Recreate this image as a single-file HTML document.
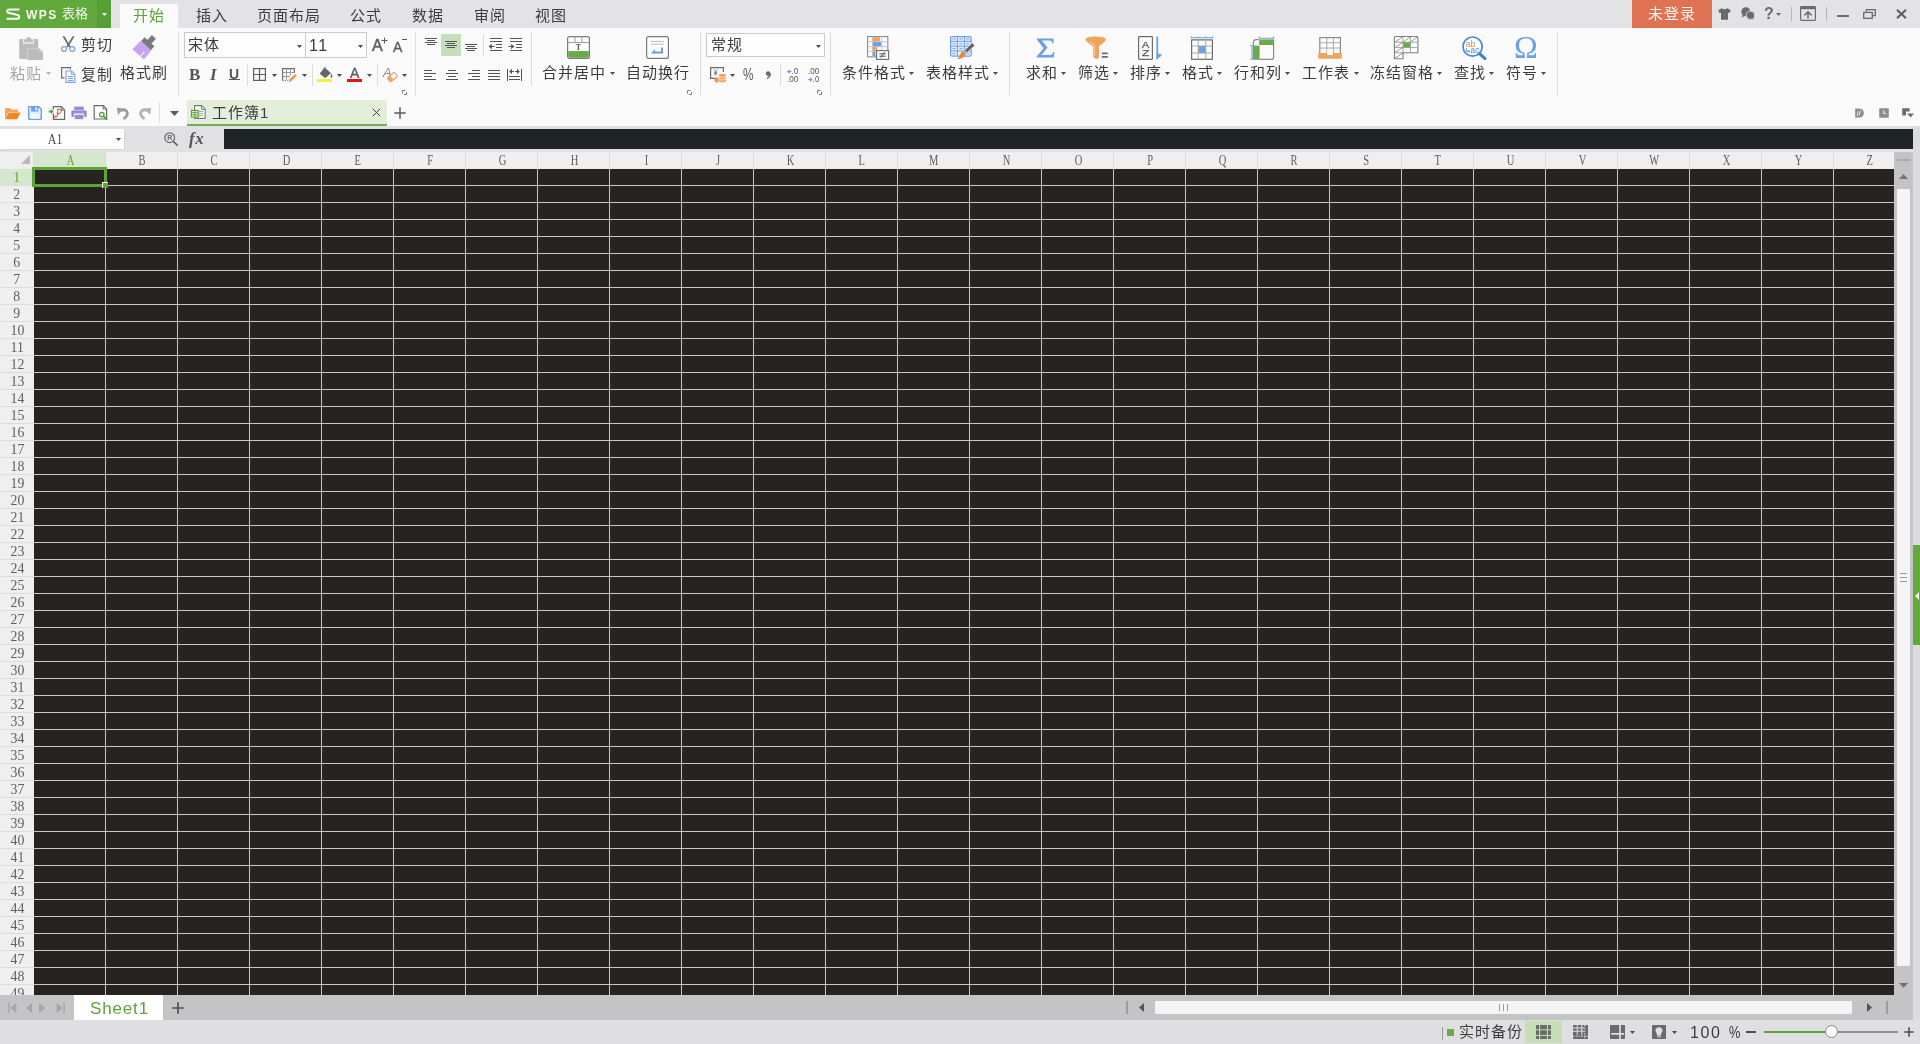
<!DOCTYPE html>
<html lang="zh-CN"><head><meta charset="utf-8"><title>WPS 表格 - 工作簿1</title>
<style>
html,body{margin:0;padding:0}
body{width:1920px;height:1044px;position:relative;will-change:transform;overflow:hidden;background:#fafafa;
 font-family:"Liberation Sans","Noto Sans CJK SC","WenQuanYi Zen Hei",sans-serif;color:#3c3c3c}
.t{position:absolute;white-space:nowrap;display:block}
.r{position:absolute;display:block}
.ser{font-family:"Liberation Serif","Noto Serif CJK SC",serif}

.ch{position:absolute;top:0;width:72px;height:17px;line-height:17px;text-align:center;font-size:15px}
.rh{position:absolute;left:0;width:34px;height:17px;line-height:17px;text-align:center;font-size:15px}
.ch i,.rh i{font-style:normal;display:inline-block;transform-origin:50% 50%}
.ch i{transform:scaleX(.7)}.rh i{transform:scaleX(.92)}
.cl{position:absolute;top:1px;width:1px;height:15px;background:#dadada}
.rl{position:absolute;left:0;width:33px;height:1px;background:#dcdcdc}

</style></head><body>
<div class="r" style="left:0px;top:0px;width:1920px;height:28px;background:#e3e3e5;"></div>
<div class="r" style="left:0px;top:28px;width:1920px;height:98px;background:#fafafa;"></div>
<div class="r" style="left:0px;top:126px;width:1920px;height:26px;background:#e1e1e3;"></div>
<div class="r" style="left:0px;top:152px;width:1894px;height:17px;background:#efefef;"></div>
<div class="r" style="left:0px;top:169px;width:34px;height:826px;background:#efefef;"></div>
<div class="r" style="left:34px;top:169px;width:1860px;height:826px;background:#262321;background-image:linear-gradient(to right,transparent 71px,#cbc8c4 71px),linear-gradient(to bottom,transparent 16px,#cbc8c4 16px);background-size:72px 17px;"></div>
<div class="r" style="left:1894px;top:152px;width:19px;height:843px;background:#c4c4c6;"></div>
<div class="r" style="left:1913px;top:126px;width:7px;height:894px;background:#dcdcde;"></div>
<div class="r" style="left:0px;top:995px;width:1913px;height:25px;background:#c4c4c6;"></div>
<div class="r" style="left:0px;top:1020px;width:1920px;height:24px;background:#dfdfe1;"></div>
<div class="r" style="left:34px;top:152px;width:72px;height:16px;background:#d5e8cd;"></div>
<div class="r" style="left:0px;top:169px;width:33px;height:17px;background:#d5e8cd;"></div>
<div class="r" style="left:33px;top:153px;width:1px;height:15px;background:#dadada;"></div>
<div class="r ser" id="colhdr" style="left:0;top:152px;width:1894px;height:17px;overflow:hidden"><span class="ch" style="left:34px;color:#5ea23b"><i>A</i></span><b class="cl" style="left:105px"></b><span class="ch" style="left:106px;color:#5e5e5e"><i>B</i></span><b class="cl" style="left:177px"></b><span class="ch" style="left:178px;color:#5e5e5e"><i>C</i></span><b class="cl" style="left:249px"></b><span class="ch" style="left:250px;color:#5e5e5e"><i>D</i></span><b class="cl" style="left:321px"></b><span class="ch" style="left:322px;color:#5e5e5e"><i>E</i></span><b class="cl" style="left:393px"></b><span class="ch" style="left:394px;color:#5e5e5e"><i>F</i></span><b class="cl" style="left:465px"></b><span class="ch" style="left:466px;color:#5e5e5e"><i>G</i></span><b class="cl" style="left:537px"></b><span class="ch" style="left:538px;color:#5e5e5e"><i>H</i></span><b class="cl" style="left:609px"></b><span class="ch" style="left:610px;color:#5e5e5e"><i>I</i></span><b class="cl" style="left:681px"></b><span class="ch" style="left:682px;color:#5e5e5e"><i>J</i></span><b class="cl" style="left:753px"></b><span class="ch" style="left:754px;color:#5e5e5e"><i>K</i></span><b class="cl" style="left:825px"></b><span class="ch" style="left:826px;color:#5e5e5e"><i>L</i></span><b class="cl" style="left:897px"></b><span class="ch" style="left:898px;color:#5e5e5e"><i>M</i></span><b class="cl" style="left:969px"></b><span class="ch" style="left:970px;color:#5e5e5e"><i>N</i></span><b class="cl" style="left:1041px"></b><span class="ch" style="left:1042px;color:#5e5e5e"><i>O</i></span><b class="cl" style="left:1113px"></b><span class="ch" style="left:1114px;color:#5e5e5e"><i>P</i></span><b class="cl" style="left:1185px"></b><span class="ch" style="left:1186px;color:#5e5e5e"><i>Q</i></span><b class="cl" style="left:1257px"></b><span class="ch" style="left:1258px;color:#5e5e5e"><i>R</i></span><b class="cl" style="left:1329px"></b><span class="ch" style="left:1330px;color:#5e5e5e"><i>S</i></span><b class="cl" style="left:1401px"></b><span class="ch" style="left:1402px;color:#5e5e5e"><i>T</i></span><b class="cl" style="left:1473px"></b><span class="ch" style="left:1474px;color:#5e5e5e"><i>U</i></span><b class="cl" style="left:1545px"></b><span class="ch" style="left:1546px;color:#5e5e5e"><i>V</i></span><b class="cl" style="left:1617px"></b><span class="ch" style="left:1618px;color:#5e5e5e"><i>W</i></span><b class="cl" style="left:1689px"></b><span class="ch" style="left:1690px;color:#5e5e5e"><i>X</i></span><b class="cl" style="left:1761px"></b><span class="ch" style="left:1762px;color:#5e5e5e"><i>Y</i></span><b class="cl" style="left:1833px"></b><span class="ch" style="left:1834px;color:#5e5e5e"><i>Z</i></span><b class="cl" style="left:1905px"></b></div>
<div class="r ser" id="rowhdr" style="left:0;top:169px;width:34px;height:826px;overflow:hidden"><span class="rh" style="top:0px;color:#5ea23b"><i>1</i></span><b class="rl" style="top:16px"></b><span class="rh" style="top:17px;color:#5e5e5e"><i>2</i></span><b class="rl" style="top:33px"></b><span class="rh" style="top:34px;color:#5e5e5e"><i>3</i></span><b class="rl" style="top:50px"></b><span class="rh" style="top:51px;color:#5e5e5e"><i>4</i></span><b class="rl" style="top:67px"></b><span class="rh" style="top:68px;color:#5e5e5e"><i>5</i></span><b class="rl" style="top:84px"></b><span class="rh" style="top:85px;color:#5e5e5e"><i>6</i></span><b class="rl" style="top:101px"></b><span class="rh" style="top:102px;color:#5e5e5e"><i>7</i></span><b class="rl" style="top:118px"></b><span class="rh" style="top:119px;color:#5e5e5e"><i>8</i></span><b class="rl" style="top:135px"></b><span class="rh" style="top:136px;color:#5e5e5e"><i>9</i></span><b class="rl" style="top:152px"></b><span class="rh" style="top:153px;color:#5e5e5e"><i>10</i></span><b class="rl" style="top:169px"></b><span class="rh" style="top:170px;color:#5e5e5e"><i>11</i></span><b class="rl" style="top:186px"></b><span class="rh" style="top:187px;color:#5e5e5e"><i>12</i></span><b class="rl" style="top:203px"></b><span class="rh" style="top:204px;color:#5e5e5e"><i>13</i></span><b class="rl" style="top:220px"></b><span class="rh" style="top:221px;color:#5e5e5e"><i>14</i></span><b class="rl" style="top:237px"></b><span class="rh" style="top:238px;color:#5e5e5e"><i>15</i></span><b class="rl" style="top:254px"></b><span class="rh" style="top:255px;color:#5e5e5e"><i>16</i></span><b class="rl" style="top:271px"></b><span class="rh" style="top:272px;color:#5e5e5e"><i>17</i></span><b class="rl" style="top:288px"></b><span class="rh" style="top:289px;color:#5e5e5e"><i>18</i></span><b class="rl" style="top:305px"></b><span class="rh" style="top:306px;color:#5e5e5e"><i>19</i></span><b class="rl" style="top:322px"></b><span class="rh" style="top:323px;color:#5e5e5e"><i>20</i></span><b class="rl" style="top:339px"></b><span class="rh" style="top:340px;color:#5e5e5e"><i>21</i></span><b class="rl" style="top:356px"></b><span class="rh" style="top:357px;color:#5e5e5e"><i>22</i></span><b class="rl" style="top:373px"></b><span class="rh" style="top:374px;color:#5e5e5e"><i>23</i></span><b class="rl" style="top:390px"></b><span class="rh" style="top:391px;color:#5e5e5e"><i>24</i></span><b class="rl" style="top:407px"></b><span class="rh" style="top:408px;color:#5e5e5e"><i>25</i></span><b class="rl" style="top:424px"></b><span class="rh" style="top:425px;color:#5e5e5e"><i>26</i></span><b class="rl" style="top:441px"></b><span class="rh" style="top:442px;color:#5e5e5e"><i>27</i></span><b class="rl" style="top:458px"></b><span class="rh" style="top:459px;color:#5e5e5e"><i>28</i></span><b class="rl" style="top:475px"></b><span class="rh" style="top:476px;color:#5e5e5e"><i>29</i></span><b class="rl" style="top:492px"></b><span class="rh" style="top:493px;color:#5e5e5e"><i>30</i></span><b class="rl" style="top:509px"></b><span class="rh" style="top:510px;color:#5e5e5e"><i>31</i></span><b class="rl" style="top:526px"></b><span class="rh" style="top:527px;color:#5e5e5e"><i>32</i></span><b class="rl" style="top:543px"></b><span class="rh" style="top:544px;color:#5e5e5e"><i>33</i></span><b class="rl" style="top:560px"></b><span class="rh" style="top:561px;color:#5e5e5e"><i>34</i></span><b class="rl" style="top:577px"></b><span class="rh" style="top:578px;color:#5e5e5e"><i>35</i></span><b class="rl" style="top:594px"></b><span class="rh" style="top:595px;color:#5e5e5e"><i>36</i></span><b class="rl" style="top:611px"></b><span class="rh" style="top:612px;color:#5e5e5e"><i>37</i></span><b class="rl" style="top:628px"></b><span class="rh" style="top:629px;color:#5e5e5e"><i>38</i></span><b class="rl" style="top:645px"></b><span class="rh" style="top:646px;color:#5e5e5e"><i>39</i></span><b class="rl" style="top:662px"></b><span class="rh" style="top:663px;color:#5e5e5e"><i>40</i></span><b class="rl" style="top:679px"></b><span class="rh" style="top:680px;color:#5e5e5e"><i>41</i></span><b class="rl" style="top:696px"></b><span class="rh" style="top:697px;color:#5e5e5e"><i>42</i></span><b class="rl" style="top:713px"></b><span class="rh" style="top:714px;color:#5e5e5e"><i>43</i></span><b class="rl" style="top:730px"></b><span class="rh" style="top:731px;color:#5e5e5e"><i>44</i></span><b class="rl" style="top:747px"></b><span class="rh" style="top:748px;color:#5e5e5e"><i>45</i></span><b class="rl" style="top:764px"></b><span class="rh" style="top:765px;color:#5e5e5e"><i>46</i></span><b class="rl" style="top:781px"></b><span class="rh" style="top:782px;color:#5e5e5e"><i>47</i></span><b class="rl" style="top:798px"></b><span class="rh" style="top:799px;color:#5e5e5e"><i>48</i></span><b class="rl" style="top:815px"></b><span class="rh" style="top:816px;color:#5e5e5e"><i>49</i></span><b class="rl" style="top:832px"></b></div>
<svg class="r" style="left:21px;top:155px;" width="9" height="9" viewBox="0 0 9 9"><path d="M9 0V9H0Z" fill="#b9b9b9"/></svg>
<div class="r" style="left:32px;top:167px;width:75px;height:20px;background:transparent;box-sizing:border-box;border:3px solid #5ea23b"></div>
<div class="r" style="left:102px;top:182px;width:6px;height:6px;background:#5ea23b;box-sizing:border-box;border:1px solid #f4f4f4;border-right:none;border-bottom:none"></div>
<div class="r" style="left:0px;top:129px;width:124px;height:20px;background:#ffffff;box-shadow:1px 1px 0 #d6d6d8"></div>
<span class="t ser" style="left:0;top:131px;width:110px;text-align:center;font-size:15px;line-height:17px;color:#4a4a4a"><i style="font-style:normal;display:inline-block;transform:scaleX(.8)">A1</i></span>
<svg class="r" style="left:116px;top:138px" width="5" height="3" viewBox="0 0 5 3"><path d="M0 0H5L2.5 3Z" fill="#4a4a4a"/></svg>
<svg class="r" style="left:164px;top:132px;" width="14" height="14" viewBox="0 0 14 14"><circle cx="5.7" cy="5.7" r="4.9" fill="none" stroke="#6b6b6b" stroke-width="1.2"/><path d="M9.3 9.3L13.2 13.2" stroke="#6b6b6b" stroke-width="1.8" stroke-linecap="round"/><text x="5.7" y="8.2" font-size="7" font-weight="bold" text-anchor="middle" fill="#6b6b6b" font-family="Liberation Sans,sans-serif">R</text></svg>
<span class="t ser" style="left:189px;top:130px;font-size:17px;line-height:18px;font-style:italic;font-weight:bold;letter-spacing:.6px;color:#555">fx</span>
<div class="r" style="left:224px;top:129px;width:1689px;height:20px;background:#1f2426;"></div>
<svg class="r" style="left:4px;top:107px;" width="17" height="13" viewBox="0 0 17 13"><path d="M1 2.4Q1 1 2.4 1H6l1.4 1.6H12.8Q14 2.6 14 3.8V5H4.2L1.4 11.4H1Z" fill="#f2a65a"/><path d="M4.6 5.4H16.6L13.2 12.2H1.2Z" fill="#f5861f"/></svg>
<svg class="r" style="left:28px;top:106px;" width="14" height="14" viewBox="0 0 14 14"><path d="M1.5 .7H10.8L13.3 3.2V12.5Q13.3 13.3 12.5 13.3H1.5Q.7 13.3 .7 12.5V1.5Q.7 .7 1.5 .7Z" fill="#e4edfb" stroke="#6c9fe8" stroke-width="1.4"/><rect x="3.2" y="1" width="7" height="4.6" fill="#6c9fe8"/><rect x="7.2" y="1.4" width="1.8" height="3" fill="#e4edfb"/><rect x="2.4" y="7.8" width="9.2" height="5" fill="#f2f6fd"/></svg>
<svg class="r" style="left:48px;top:106px;" width="18" height="14" viewBox="0 0 18 14"><path d="M5.4 3.4V.7H13.4L16.6 3.9V13.3H5.4V7.6" fill="#fdfdfd" stroke="#6b6b6b" stroke-width="1.2"/><path d="M13.2 .9V4.1H16.4" fill="none" stroke="#6b6b6b" stroke-width="1"/><path d="M.8 4.6H3V3L5.6 5.6L3 8.2V6.6H.8Z" fill="#4da03a"/><path d="M9.4 3.4C13.6 2 14.6 6.8 11 7.6C9.8 7.8 9 7.4 9 6.6M9.6 3.4C10 6 9.8 8.8 8.8 10.6C7.8 12.2 5.8 11.8 6.4 10.4C6.8 9.4 8.2 9.6 8.4 10.4" fill="none" stroke="#d9432f" stroke-width="1"/></svg>
<svg class="r" style="left:71px;top:106px;" width="16" height="14" viewBox="0 0 16 14"><rect x="3.2" y=".6" width="9.6" height="3.4" fill="#9090d4"/><rect x=".4" y="4.4" width="15.2" height="6.6" rx="1" fill="#8a8ad0"/><rect x="3.2" y="8.4" width="9.6" height="5.2" fill="#9090d4" stroke="#fafafa" stroke-width=".8"/><rect x="3" y="6.8" width="10" height=".9" fill="#fafafa" opacity=".7"/></svg>
<svg class="r" style="left:93px;top:105px;" width="15" height="15" viewBox="0 0 15 15"><path d="M1.2 .7H10.4L13.6 3.9V14H1.2Z" fill="#fdfdfd" stroke="#6b6b6b" stroke-width="1.2"/><path d="M10.2 .9V4.1H13.4" fill="none" stroke="#6b6b6b" stroke-width="1"/><circle cx="8.8" cy="9.6" r="2.3" fill="#fdfdfd" stroke="#4da03a" stroke-width="1.2"/><path d="M10.6 11.4L13.6 14.2" stroke="#4da03a" stroke-width="1.8" stroke-linecap="round"/></svg>
<svg class="r" style="left:116px;top:106px;" width="14" height="14" viewBox="0 0 14 14"><path d="M7.4 12.8C11.4 11 12.4 7 10.2 4.8C8.6 3.4 6.4 3.6 4.8 5" fill="none" stroke="#9c9c9c" stroke-width="2.8"/><path d="M.8 1.8L7.6 2.6L2 9Z" fill="#9c9c9c"/></svg>
<svg class="r" style="left:138px;top:106px;" width="14" height="14" viewBox="0 0 14 14"><path d="M6.6 12.8C2.6 11 1.6 7 3.8 4.8C5.4 3.4 7.6 3.6 9.2 5" fill="none" stroke="#b2b2b2" stroke-width="2.8"/><path d="M13.2 1.8L6.4 2.6L12 9Z" fill="#b2b2b2"/></svg>
<div class="r" style="left:159px;top:102px;width:1px;height:21px;background:#dedede;"></div>
<svg class="r" style="left:170px;top:111px" width="9" height="5" viewBox="0 0 9 5"><path d="M0 0H9L4.5 5Z" fill="#5a5a5a"/></svg>
<div class="r" style="left:187px;top:100px;width:200px;height:26px;background:#e2edda;"></div>
<div class="r" style="left:187px;top:124px;width:200px;height:2px;background:#72af52;"></div>
<svg class="r" style="left:191px;top:105px;" width="15" height="14" viewBox="0 0 15 14"><path d="M3.6 .6H10.6L14.2 4.2V13.4H3.6Z" fill="#fff" stroke="#7a7a7a" stroke-width="1.1"/><path d="M10.4 .8V4.4H14" fill="none" stroke="#7a7a7a" stroke-width="1"/><path d="M6 6.4H12.4M6 8.4H12.4M6 10.4H12.4" stroke="#9a9a9a" stroke-width=".9"/><rect x=".6" y="5.4" width="6.6" height="6.6" fill="#fff" stroke="#57a33a" stroke-width="1.2"/><path d="M1.2 7.6H6.6M1.2 9.8H6.6M3.9 6V11.4" stroke="#57a33a" stroke-width="1"/></svg>
<span class="t" style="left:212px;top:105px;font-size:15px;letter-spacing:1px;line-height:16px;color:#3c3c3c;">工作簿1</span>
<svg class="r" style="left:372px;top:108px;" width="9" height="9" viewBox="0 0 9 9"><path d="M.8 .8L8.2 8.2M8.2 .8L.8 8.2" stroke="#3f3f3f" stroke-width="1"/></svg>
<svg class="r" style="left:394px;top:107px;" width="12" height="12" viewBox="0 0 12 12"><path d="M6 .3V11.7M.3 6H11.7" stroke="#5a5a5a" stroke-width="1.5"/></svg>
<svg class="r" style="left:1854px;top:108px;" width="10" height="10" viewBox="0 0 10 10"><path d="M1.2 .4H5Q9.8 .8 9.8 5Q9.8 9.2 5 9.6H1.2Z" fill="#8b8b96"/><path d="M3.2 7.4L4.2 3.4M5 7.6L6.6 2.6" stroke="#f3f3f3" stroke-width=".9"/></svg>
<svg class="r" style="left:1879px;top:108px;" width="10" height="10" viewBox="0 0 10 10"><rect x=".2" y=".2" width="9.6" height="9.6" rx="1" fill="#8b8b96"/><path d="M4.6 2.4V5.4H7.2" stroke="#f3f3f3" stroke-width="1" fill="none"/></svg>
<svg class="r" style="left:1902px;top:108px;" width="12" height="10" viewBox="0 0 12 10"><path d="M.2 .2H7.6V3.6H4V7.4H.2Z" fill="#6d6d6d"/><path d="M5.2 5.4H12L8.6 9.6Z" fill="#6d6d6d"/></svg>
<div class="r" style="left:0px;top:0px;width:97px;height:28px;background:#61a93d;"></div>
<div class="r" style="left:97px;top:0px;width:14px;height:28px;background:#579f34;"></div>
<svg class="r" style="left:6px;top:8px;" width="15" height="12" viewBox="0 0 15 12"><path d="M13.4 1.4H3.4Q1.2 1.4 1.2 3.2Q1.2 4.9 3.4 5.1L10.8 6.7Q13.2 7.1 13.2 8.9Q13.2 10.7 11 10.7H.6" fill="none" stroke="#f3f9ee" stroke-width="2" stroke-linejoin="round"/></svg>
<span class="t" style="left:26px;top:8px;font-size:12px;line-height:12px;color:#f3f9ee;font-weight:bold;letter-spacing:1.4px;line-height:14px">WPS</span>
<span class="t" style="left:62px;top:7px;font-size:13px;line-height:13px;color:#f3f9ee;line-height:13px">表格</span>
<svg class="r" style="left:102px;top:13px" width="5" height="3" viewBox="0 0 5 3"><path d="M0 0H5L2.5 3Z" fill="#f3f9ee"/></svg>
<div class="r" style="left:120px;top:4px;width:58px;height:24px;background:#fafafa;"></div>
<span class="t" style="left:133px;top:8px;font-size:15px;letter-spacing:1px;line-height:16px;color:#5ea23b;">开始</span>
<span class="t" style="left:196px;top:8px;font-size:15px;letter-spacing:1px;line-height:16px;color:#3c3c3c;">插入</span>
<span class="t" style="left:257px;top:8px;font-size:15px;letter-spacing:1px;line-height:16px;color:#3c3c3c;">页面布局</span>
<span class="t" style="left:350px;top:8px;font-size:15px;letter-spacing:1px;line-height:16px;color:#3c3c3c;">公式</span>
<span class="t" style="left:412px;top:8px;font-size:15px;letter-spacing:1px;line-height:16px;color:#3c3c3c;">数据</span>
<span class="t" style="left:474px;top:8px;font-size:15px;letter-spacing:1px;line-height:16px;color:#3c3c3c;">审阅</span>
<span class="t" style="left:535px;top:8px;font-size:15px;letter-spacing:1px;line-height:16px;color:#3c3c3c;">视图</span>
<div class="r" style="left:1632px;top:0px;width:80px;height:28px;background:#e07254;"></div>
<span class="t" style="left:1648px;top:6px;font-size:15px;letter-spacing:1px;line-height:16px;color:#fdf3ef;">未登录</span>
<svg class="r" style="left:1718px;top:8px;" width="13" height="12" viewBox="0 0 13 12"><path d="M3.6 .3Q6.5 2.4 9.4 .3L12.8 2.2L11.4 5.2L10 4.6V11.7H3V4.6L1.6 5.2L.2 2.2Z" fill="#6b6b6b"/></svg>
<svg class="r" style="left:1741px;top:7px;" width="14" height="13" viewBox="0 0 14 13"><circle cx="4.8" cy="4.8" r="4.5" fill="#6b6b6b"/><path d="M1.6 7.4L.8 10.4L4.4 8.8Z" fill="#6b6b6b"/><circle cx="9.4" cy="8.2" r="4.2" fill="#6b6b6b" stroke="#e3e3e5" stroke-width=".9"/><path d="M11.2 11.2L12.8 12.8L12.6 10.2Z" fill="#6b6b6b"/></svg>
<span class="t" style="left:1764px;top:6px;font-size:16px;line-height:16px;color:#6b6b6b;font-weight:bold;line-height:16px">?</span>
<svg class="r" style="left:1776px;top:13px" width="5" height="3" viewBox="0 0 5 3"><path d="M0 0H5L2.5 3Z" fill="#6b6b6b"/></svg>
<div class="r" style="left:1791px;top:7px;width:1px;height:14px;background:#b4b4b6;"></div>
<svg class="r" style="left:1800px;top:6px;" width="16" height="15" viewBox="0 0 16 15"><rect x=".6" y=".6" width="14.8" height="13.8" rx="1" fill="none" stroke="#6b6b6b" stroke-width="1.2"/><rect x=".6" y=".6" width="14.8" height="2.6" fill="#6b6b6b"/><path d="M8 12.6V6M4.4 9.4L8 5.8L11.6 9.4" fill="none" stroke="#6b6b6b" stroke-width="1.5"/></svg>
<div class="r" style="left:1826px;top:7px;width:1px;height:14px;background:#b4b4b6;"></div>
<div class="r" style="left:1837px;top:15px;width:12px;height:2px;background:#6b6b6b;"></div>
<svg class="r" style="left:1863px;top:9px;" width="13" height="10" viewBox="0 0 13 10"><path d="M3.4 2.6V.7H12.3V6.6H9.6" fill="none" stroke="#6b6b6b" stroke-width="1.3"/><rect x=".7" y="3.4" width="8.6" height="5.9" fill="none" stroke="#6b6b6b" stroke-width="1.3"/></svg>
<svg class="r" style="left:1896px;top:9px;" width="11" height="10" viewBox="0 0 11 10"><path d="M1 .8L10 9.2M10 .8L1 9.2" stroke="#5f5f5f" stroke-width="2.1"/></svg>
<svg class="r" style="left:19px;top:37px;" width="25" height="23" viewBox="0 0 25 23"><path d="M1.4 2H18Q19.2 2 19.2 3.2V11H8.2V22H1.4Q.2 22 .2 20.8V3.2Q.2 2 1.4 2Z" fill="#bcbcbc"/><rect x="4.2" y="1.6" width="10.8" height="5" fill="#fafafa"/><path d="M5.2 2.2H7.2Q7.4 0 9.7 0Q12 0 12.2 2.2H14.2V5.4H5.2Z" fill="#bcbcbc"/><path d="M8.4 11.3H20.3L24 15V22.9H8.4Z" fill="#bcbcbc"/><path d="M20.5 11.3V14.8H24Z" fill="#d9d9d9"/></svg>
<span class="t" style="left:10px;top:66px;font-size:15px;letter-spacing:1px;line-height:16px;color:#a6a6a6;">粘贴</span>
<svg class="r" style="left:46px;top:72px" width="5" height="3" viewBox="0 0 5 3"><path d="M0 0H5L2.5 3Z" fill="#b5b5b5"/></svg>
<svg class="r" style="left:61px;top:36px;" width="15" height="16" viewBox="0 0 15 16"><path d="M1.4 .3H3.5L9.6 10.4L8.2 11.4Z" fill="#6b6b6b"/><path d="M13.6 .3H11.5L5.4 10.4L6.8 11.4Z" fill="#6b6b6b"/><ellipse cx="3.1" cy="13" rx="2.5" ry="2.4" fill="none" stroke="#7a9fdc" stroke-width="1.2"/><ellipse cx="11.3" cy="13" rx="2.5" ry="2.4" fill="none" stroke="#7a9fdc" stroke-width="1.2"/></svg>
<span class="t" style="left:81px;top:37px;font-size:15px;letter-spacing:1px;line-height:16px;color:#3c3c3c;">剪切</span>
<svg class="r" style="left:61px;top:67px;" width="15" height="16" viewBox="0 0 15 16"><path d="M3.6 10.9H.6V.6H9.4V2.6" fill="none" stroke="#6b6b6b" stroke-width="1.1"/><path d="M5 4H10.6L13.8 7.2V15.4H5Z" fill="#fbfdff" stroke="#7a9fdc" stroke-width="1.1"/><path d="M10.4 4.2V7.4H13.6" fill="none" stroke="#7a9fdc" stroke-width=".9"/><path d="M6.8 9.5H12M6.8 11.5H12M6.8 13.5H12" stroke="#7a9fdc" stroke-width="1" shape-rendering="crispEdges"/></svg>
<span class="t" style="left:81px;top:67px;font-size:15px;letter-spacing:1px;line-height:16px;color:#3c3c3c;">复制</span>
<svg class="r" style="left:132px;top:35px;" width="25" height="25" viewBox="0 0 25 25"><g transform="translate(12.4 12.4) rotate(42)"><rect x="-2.7" y="-14.2" width="5.4" height="7.4" fill="#7b7b7b"/><rect x="-6.6" y="-7.6" width="13.2" height="5.4" fill="#7b7b7b"/><path d="M-7.2 -2.2H7.2L7.8 9.4H-7.8Z" fill="#caa2f2"/><path d="M2.9 9.6V3.4" stroke="#fafafa" stroke-width="1"/></g></svg>
<span class="t" style="left:120px;top:65px;font-size:15px;letter-spacing:1px;line-height:16px;color:#3c3c3c;">格式刷</span>
<div class="r" style="left:178px;top:32px;width:1px;height:63px;background:#dcdcdc;"></div>
<div class="r" style="left:184px;top:32px;width:122px;height:26px;background:#fdfdfd;box-sizing:border-box;border:1px solid #cacaca"></div>
<div class="r" style="left:305px;top:32px;width:62px;height:26px;background:#fdfdfd;box-sizing:border-box;border:1px solid #cacaca"></div>
<span class="t" style="left:188px;top:37px;font-size:15px;letter-spacing:1px;line-height:16px;color:#3c3c3c;">宋体</span>
<svg class="r" style="left:297px;top:45px" width="5" height="3" viewBox="0 0 5 3"><path d="M0 0H5L2.5 3Z" fill="#4a4a4a"/></svg>
<span class="t" style="left:309px;top:38px;font-size:16px;line-height:16px;color:#3c3c3c;letter-spacing:1.5px">11</span>
<svg class="r" style="left:358px;top:45px" width="5" height="3" viewBox="0 0 5 3"><path d="M0 0H5L2.5 3Z" fill="#4a4a4a"/></svg>
<span class="t" style="left:372px;top:38px;font-size:16px;line-height:16px;color:#5a5a5a;line-height:16px;-webkit-text-stroke:.45px #5a5a5a">A</span>
<svg class="r" style="left:381px;top:37px;" width="7" height="7" viewBox="0 0 7 7"><path d="M3.5 .5V6.5M.5 3.5H6.5" stroke="#5a5a5a" stroke-width="1"/></svg>
<span class="t" style="left:393px;top:40px;font-size:14px;line-height:14px;color:#5a5a5a;line-height:14px;-webkit-text-stroke:.35px #5a5a5a">A</span>
<div class="r" style="left:402px;top:39px;width:5px;height:1px;background:#5a5a5a;"></div>
<span class="t ser" style="left:189px;top:66px;font-size:17px;line-height:17px;font-weight:bold;color:#555">B</span>
<span class="t ser" style="left:210px;top:66px;font-size:17px;line-height:17px;font-style:italic;font-weight:bold;color:#555">I</span>
<span class="t" style="left:229px;top:67px;font-size:14px;line-height:14px;color:#555;font-weight:bold;line-height:14px">U</span>
<div class="r" style="left:229px;top:79px;width:11px;height:1px;background:#555;"></div>
<div class="r" style="left:247px;top:64px;width:1px;height:22px;background:#dcdcdc;"></div>
<svg class="r" style="left:253px;top:68px;" width="13" height="13" viewBox="0 0 13 13"><rect x=".6" y=".6" width="11.8" height="11.8" fill="none" stroke="#5f5f5f" stroke-width="1.2"/><path d="M6.5 .6V12.4M.6 6.5H12.4" stroke="#5f5f5f" stroke-width="1.2"/></svg>
<svg class="r" style="left:272px;top:74px" width="5" height="3" viewBox="0 0 5 3"><path d="M0 0H5L2.5 3Z" fill="#4a4a4a"/></svg>
<svg class="r" style="left:282px;top:68px;" width="15" height="14" viewBox="0 0 15 14"><path d="M.6 12.4V.6H12.4V5" fill="none" stroke="#6b6b6b" stroke-width="1.1"/><path d="M4.5 .6V12M8.5 .6V7.5M.6 4.5H12.4M.6 8.5H8" stroke="#9a9a9a" stroke-width="1"/><path d="M.6 12.6H6" stroke="#6b6b6b" stroke-width="1" stroke-dasharray="1.2 1.2"/><path d="M13.2 6L14.8 7.6L9.2 13.2L6.6 13.8L7.4 11.4Z" fill="#ee8f4f"/></svg>
<svg class="r" style="left:302px;top:74px" width="5" height="3" viewBox="0 0 5 3"><path d="M0 0H5L2.5 3Z" fill="#4a4a4a"/></svg>
<div class="r" style="left:312px;top:64px;width:1px;height:22px;background:#dcdcdc;"></div>
<svg class="r" style="left:317px;top:67px;" width="16" height="15" viewBox="0 0 16 15"><path d="M8.4 1.2L14 6L9 10.6Q8.2 11.2 7.4 10.6L3.4 7.2Q2.8 6.4 3.4 5.6Z" fill="#666"/><path d="M5.4 4.2L7 1.4Q7.6 .4 8.8 1.2" fill="none" stroke="#666" stroke-width="1.1"/><path d="M14.2 6.6Q15.8 9 15.2 10.2Q14.6 11 13.8 10.4Q13.2 9.6 14.2 6.6Z" fill="#666"/><rect x="0" y="12" width="15" height="3" fill="#f5f032"/></svg>
<svg class="r" style="left:337px;top:74px" width="5" height="3" viewBox="0 0 5 3"><path d="M0 0H5L2.5 3Z" fill="#4a4a4a"/></svg>
<span class="t" style="left:350px;top:66px;font-size:14px;line-height:14px;color:#5f5f5f;line-height:14px;-webkit-text-stroke:.4px #5f5f5f">A</span>
<div class="r" style="left:347px;top:79px;width:15px;height:3px;background:#e01515;"></div>
<svg class="r" style="left:367px;top:74px" width="5" height="3" viewBox="0 0 5 3"><path d="M0 0H5L2.5 3Z" fill="#4a4a4a"/></svg>
<div class="r" style="left:377px;top:64px;width:1px;height:22px;background:#dcdcdc;"></div>
<span class="t" style="left:383px;top:66px;font-size:13px;line-height:13px;color:#8a8a8a;line-height:13px;font-style:italic">A</span>
<svg class="r" style="left:386px;top:71px;" width="12" height="12" viewBox="0 0 12 12"><g transform="translate(6.3 6.2) rotate(-40)"><rect x="-4.6" y="-2.6" width="9.2" height="5.2" rx="1.2" fill="#fdfdfd" stroke="#ee9d5c" stroke-width="1.1"/><path d="M-4.6 -1.4Q-4.6 -2.6 -3.4 -2.6H-.4V2.6H-3.4Q-4.6 2.6 -4.6 1.4Z" fill="#f0a869"/></g></svg>
<svg class="r" style="left:402px;top:74px" width="5" height="3" viewBox="0 0 5 3"><path d="M0 0H5L2.5 3Z" fill="#4a4a4a"/></svg>
<svg class="r" style="left:402px;top:90px;" width="6" height="6" viewBox="0 0 6 6"><path d="M.5 3.5V.5H3.5" fill="none" stroke="#7a7a7a" stroke-width="1"/><path d="M2 4.5H4.5V2" fill="none" stroke="#7a7a7a" stroke-width="1"/></svg>
<div class="r" style="left:415px;top:32px;width:1px;height:63px;background:#dcdcdc;"></div>
<div class="r" style="left:425px;top:38px;width:12px;height:1px;background:#555555;"></div>
<div class="r" style="left:427px;top:40px;width:8px;height:1px;background:#555555;"></div>
<div class="r" style="left:425px;top:42px;width:12px;height:1px;background:#555555;"></div>
<div class="r" style="left:427px;top:44px;width:8px;height:1px;background:#555555;"></div>
<div class="r" style="left:441px;top:34px;width:20px;height:22px;background:#c5e0b8;"></div>
<div class="r" style="left:445px;top:41px;width:12px;height:1px;background:#555555;"></div>
<div class="r" style="left:447px;top:43px;width:8px;height:1px;background:#555555;"></div>
<div class="r" style="left:445px;top:45px;width:12px;height:1px;background:#555555;"></div>
<div class="r" style="left:447px;top:47px;width:8px;height:1px;background:#555555;"></div>
<div class="r" style="left:465px;top:44px;width:12px;height:1px;background:#555555;"></div>
<div class="r" style="left:467px;top:46px;width:8px;height:1px;background:#555555;"></div>
<div class="r" style="left:465px;top:48px;width:12px;height:1px;background:#555555;"></div>
<div class="r" style="left:467px;top:50px;width:8px;height:1px;background:#555555;"></div>
<div class="r" style="left:483px;top:34px;width:1px;height:22px;background:#dcdcdc;"></div>
<div class="r" style="left:490px;top:38px;width:12px;height:1px;background:#555555;"></div>
<div class="r" style="left:490px;top:41px;width:12px;height:1px;background:#555555;"></div>
<div class="r" style="left:496px;top:44px;width:6px;height:1px;background:#555555;"></div>
<div class="r" style="left:496px;top:47px;width:6px;height:1px;background:#555555;"></div>
<div class="r" style="left:490px;top:50px;width:12px;height:1px;background:#555555;"></div>
<svg class="r" style="left:488px;top:43px;" width="7" height="7" viewBox="0 0 7 7"><rect x="2" y="3" width="4.6" height="1" fill="#555"/><path d="M3.8 .7L.6 3.5L3.8 6.3Z" fill="#555"/></svg>
<div class="r" style="left:510px;top:38px;width:12px;height:1px;background:#555555;"></div>
<div class="r" style="left:510px;top:41px;width:12px;height:1px;background:#555555;"></div>
<div class="r" style="left:516px;top:44px;width:6px;height:1px;background:#555555;"></div>
<div class="r" style="left:516px;top:47px;width:6px;height:1px;background:#555555;"></div>
<div class="r" style="left:510px;top:50px;width:12px;height:1px;background:#555555;"></div>
<svg class="r" style="left:508px;top:43px;" width="7" height="7" viewBox="0 0 7 7"><rect x=".4" y="3" width="4.6" height="1" fill="#555"/><path d="M3.2 .7L6.4 3.5L3.2 6.3Z" fill="#555"/></svg>
<div class="r" style="left:424px;top:70px;width:8px;height:1px;background:#555555;"></div>
<div class="r" style="left:448px;top:70px;width:8px;height:1px;background:#555555;"></div>
<div class="r" style="left:472px;top:70px;width:8px;height:1px;background:#555555;"></div>
<div class="r" style="left:488px;top:70px;width:12px;height:1px;background:#555555;"></div>
<div class="r" style="left:424px;top:73px;width:12px;height:1px;background:#555555;"></div>
<div class="r" style="left:446px;top:73px;width:12px;height:1px;background:#555555;"></div>
<div class="r" style="left:468px;top:73px;width:12px;height:1px;background:#555555;"></div>
<div class="r" style="left:488px;top:73px;width:12px;height:1px;background:#555555;"></div>
<div class="r" style="left:424px;top:76px;width:8px;height:1px;background:#555555;"></div>
<div class="r" style="left:448px;top:76px;width:8px;height:1px;background:#555555;"></div>
<div class="r" style="left:472px;top:76px;width:8px;height:1px;background:#555555;"></div>
<div class="r" style="left:488px;top:76px;width:12px;height:1px;background:#555555;"></div>
<div class="r" style="left:424px;top:79px;width:12px;height:1px;background:#555555;"></div>
<div class="r" style="left:446px;top:79px;width:12px;height:1px;background:#555555;"></div>
<div class="r" style="left:468px;top:79px;width:12px;height:1px;background:#555555;"></div>
<div class="r" style="left:488px;top:79px;width:12px;height:1px;background:#555555;"></div>
<div class="r" style="left:507px;top:69px;width:1px;height:12px;background:#555555;"></div>
<div class="r" style="left:521px;top:69px;width:1px;height:12px;background:#555555;"></div>
<div class="r" style="left:509px;top:76px;width:11px;height:1px;background:#555555;"></div>
<div class="r" style="left:509px;top:79px;width:11px;height:1px;background:#555555;"></div>
<svg class="r" style="left:509px;top:68px;" width="11" height="7" viewBox="0 0 11 7"><path d="M2 3.5H9" stroke="#555" stroke-width="1"/><path d="M3 .8L.2 3.5L3 6.2Z" fill="#555"/><path d="M8 .8L10.8 3.5L8 6.2Z" fill="#555"/><path d="M5 3.5H6" stroke="#fafafa" stroke-width="1.4"/></svg>
<div class="r" style="left:531px;top:32px;width:1px;height:54px;background:#dcdcdc;"></div>
<svg class="r" style="left:567px;top:36px;" width="23" height="23" viewBox="0 0 23 23"><rect x=".6" y=".6" width="21.8" height="21.8" rx="2" fill="#fdfdfd" stroke="#7a7a7a" stroke-width="1.2"/><path d="M.6 6.6H22.4M8 .6V6.6M15 .6V6.6" stroke="#9a9a9a" stroke-width="1"/><path d="M1.2 15H21.8V20Q21.8 21.8 20 21.8H3Q1.2 21.8 1.2 20Z" fill="#6aaa4a"/><text x="11.5" y="14" font-size="8" font-weight="bold" text-anchor="middle" fill="#5a5a5a" font-family="Liberation Serif,serif">T</text></svg>
<span class="t" style="left:542px;top:65px;font-size:15px;letter-spacing:1px;line-height:16px;color:#3c3c3c;">合并居中</span>
<svg class="r" style="left:610px;top:72px" width="5" height="3" viewBox="0 0 5 3"><path d="M0 0H5L2.5 3Z" fill="#4a4a4a"/></svg>
<svg class="r" style="left:646px;top:36px;" width="23" height="23" viewBox="0 0 23 23"><rect x=".6" y=".6" width="21.8" height="21.8" rx="2" fill="#fdfdfd" stroke="#7a7a7a" stroke-width="1.2"/><path d="M5 5.4H18M5 8.2H18" stroke="#b8b8b8" stroke-width="1"/><path d="M16 11.6V16.4H8" fill="none" stroke="#6f9be6" stroke-width="2"/><path d="M9 13L4.8 17.4H9Z" fill="#6f9be6"/></svg>
<span class="t" style="left:626px;top:65px;font-size:15px;letter-spacing:1px;line-height:16px;color:#3c3c3c;">自动换行</span>
<svg class="r" style="left:687px;top:90px;" width="6" height="6" viewBox="0 0 6 6"><path d="M.5 3.5V.5H3.5" fill="none" stroke="#7a7a7a" stroke-width="1"/><path d="M2 4.5H4.5V2" fill="none" stroke="#7a7a7a" stroke-width="1"/></svg>
<div class="r" style="left:700px;top:32px;width:1px;height:63px;background:#dcdcdc;"></div>
<div class="r" style="left:706px;top:33px;width:119px;height:24px;background:#fdfdfd;box-sizing:border-box;border:1px solid #cacaca"></div>
<span class="t" style="left:711px;top:37px;font-size:15px;letter-spacing:1px;line-height:16px;color:#3c3c3c;">常规</span>
<svg class="r" style="left:816px;top:45px" width="5" height="3" viewBox="0 0 5 3"><path d="M0 0H5L2.5 3Z" fill="#4a4a4a"/></svg>
<svg class="r" style="left:710px;top:67px;" width="17" height="16" viewBox="0 0 17 16"><path d="M7 11.4H.6V.6H13.4V5" fill="none" stroke="#6b6b6b" stroke-width="1.2"/><path d="M4 2.6L5.6 5L7.2 2.6M5.6 5V8.4M4 5.6H7.2M4 7H7.2" fill="none" stroke="#6b6b6b" stroke-width=".8"/><ellipse cx="7.2" cy="13" rx="2.8" ry="2.4" fill="#ee9444"/><g fill="#f3a24e" stroke="#fff" stroke-width=".7"><ellipse cx="12.4" cy="13.6" rx="4" ry="2"/><ellipse cx="12.4" cy="11" rx="4" ry="2"/><ellipse cx="12.4" cy="8.4" rx="4" ry="2"/></g></svg>
<svg class="r" style="left:730px;top:74px" width="5" height="3" viewBox="0 0 5 3"><path d="M0 0H5L2.5 3Z" fill="#4a4a4a"/></svg>
<span class="t" style="left:743px;top:67px;font-size:16px;line-height:16px;color:#5a5a5a;line-height:16px;transform:scaleX(.74);transform-origin:0 0">%</span>
<svg class="r" style="left:765px;top:71px;" width="6" height="8" viewBox="0 0 6 8"><circle cx="3.2" cy="2.6" r="2.4" fill="#6b6b6b"/><path d="M5.4 3Q5.4 6 2 7.4" fill="none" stroke="#6b6b6b" stroke-width="1.2"/></svg>
<div class="r" style="left:780px;top:64px;width:1px;height:22px;background:#dcdcdc;"></div>
<svg class="r" style="left:786px;top:67px;" width="13" height="16" viewBox="0 0 13 16"><text x="5.6" y="6.8" textLength="6.6" font-size="8.8" font-family="Liberation Sans,sans-serif" fill="#555" lengthAdjust="spacingAndGlyphs">.0</text><text x=".9" y="15" textLength="11.3" font-size="8.8" font-family="Liberation Sans,sans-serif" fill="#555" lengthAdjust="spacingAndGlyphs">.00</text><path d="M5.6 4.6H2.6" stroke="#6f9be6" stroke-width="1.1"/><path d="M3.6 2.2L1 4.6L3.6 7Z" fill="#6f9be6"/></svg>
<svg class="r" style="left:807px;top:67px;" width="13" height="16" viewBox="0 0 13 16"><text x="1" y="6.8" textLength="11.3" font-size="8.8" font-family="Liberation Sans,sans-serif" fill="#555" lengthAdjust="spacingAndGlyphs">.00</text><text x="5.8" y="15" textLength="6.5" font-size="8.8" font-family="Liberation Sans,sans-serif" fill="#555" lengthAdjust="spacingAndGlyphs">.0</text><path d="M1 12.6H4" stroke="#6f9be6" stroke-width="1.1"/><path d="M3 10.2L5.6 12.6L3 15Z" fill="#6f9be6"/></svg>
<svg class="r" style="left:817px;top:90px;" width="6" height="6" viewBox="0 0 6 6"><path d="M.5 3.5V.5H3.5" fill="none" stroke="#7a7a7a" stroke-width="1"/><path d="M2 4.5H4.5V2" fill="none" stroke="#7a7a7a" stroke-width="1"/></svg>
<div class="r" style="left:830px;top:32px;width:1px;height:63px;background:#dcdcdc;"></div>
<svg class="r" style="left:867px;top:36px;" width="23" height="24" viewBox="0 0 23 24"><rect x=".6" y=".6" width="20.2" height="20.2" fill="#fdfdfd" stroke="#8a8a8a" stroke-width="1.1"/><rect x="5.6" y="1.2" width="7.4" height="4.4" fill="#f0a35e"/><rect x="5.6" y="6" width="8.6" height="4.4" fill="#6c9fe8"/><rect x="5.6" y="10.8" width="4.4" height="4.4" fill="#f0a35e"/><rect x="5.6" y="15.6" width="2.8" height="4.6" fill="#6c9fe8"/><path d="M5.6 .6V20.8M14.8 .6V14M.6 5.8H20.8M.6 10.6H20.8M.6 15.4H9" stroke="#c2c2c2" stroke-width=".9"/><rect x="9.6" y="14.6" width="12" height="8.8" fill="#fdfdfd" stroke="#6b6b6b" stroke-width="1.1"/><path d="M12.4 17.8H18.8M12.4 20.2H18.8M17.4 16.2L13.8 21.8" stroke="#555" stroke-width="1"/></svg>
<span class="t" style="left:842px;top:65px;font-size:15px;letter-spacing:1px;line-height:16px;color:#3c3c3c;">条件格式</span>
<svg class="r" style="left:909px;top:72px" width="5" height="3" viewBox="0 0 5 3"><path d="M0 0H5L2.5 3Z" fill="#4a4a4a"/></svg>
<svg class="r" style="left:950px;top:36px;" width="25" height="24" viewBox="0 0 25 24"><rect x=".6" y=".6" width="20.6" height="19.6" rx="1.6" fill="#e4eefc" stroke="#6c9fe8" stroke-width="1.2"/><path d="M.6 5.4H21.2M.6 10.2H21.2M.6 15H21.2M7.4 .6V20.2M14.4 .6V20.2" stroke="#6c9fe8" stroke-width="1"/><path d="M2.4 3H5.6M9.4 3H12.6M16.2 3H19.4M2.4 7.8H5.6M9.4 7.8H12.6M16.2 7.8H19.4M2.4 12.6H5.6M9.4 12.6H12.6M2.4 17.6H5.6M16.2 17.6H19.4" stroke="#6c9fe8" stroke-width=".9"/><path d="M22.4 6.8L24.8 9.4L16.2 17.6L13.6 15Z" fill="#5f5f5f" stroke="#fafafa" stroke-width=".7"/><path d="M14.6 14.2L17 16.6" stroke="#dcdcdc" stroke-width="1"/><path d="M13.2 15.2L16 18Q13.4 23.2 6.6 23.2Q10.4 20.6 10.6 17.8Q11.2 15.2 13.2 15.2Z" fill="#e8863a"/></svg>
<span class="t" style="left:926px;top:65px;font-size:15px;letter-spacing:1px;line-height:16px;color:#3c3c3c;">表格样式</span>
<svg class="r" style="left:993px;top:72px" width="5" height="3" viewBox="0 0 5 3"><path d="M0 0H5L2.5 3Z" fill="#4a4a4a"/></svg>
<div class="r" style="left:1009px;top:32px;width:1px;height:63px;background:#dcdcdc;"></div>
<svg class="r" style="left:1036px;top:38px;" width="20" height="20" viewBox="0 0 20 20"><path d="M.8 .4H17.6V5.2H16.4Q16 2.4 13.4 2.4H5.8L11.6 9.6L5.4 17H14Q16.6 17 17.2 14H18.4L17.8 19.6H.6V18.4L7.6 10.2L.8 1.6Z" fill="#6c9fe8"/></svg>
<span class="t" style="left:1026px;top:65px;font-size:15px;letter-spacing:1px;line-height:16px;color:#3c3c3c;">求和</span>
<svg class="r" style="left:1061px;top:72px" width="5" height="3" viewBox="0 0 5 3"><path d="M0 0H5L2.5 3Z" fill="#4a4a4a"/></svg>
<svg class="r" style="left:1085px;top:36px;" width="24" height="24" viewBox="0 0 24 24"><path d="M.4 3.6Q.4 .4 10.6 .4Q20.8 .4 20.8 3.6Q20.8 5.4 14 10.6V20.6Q14 23 11.8 23Q10.2 23 9 21.4L8 20V10.6Q.4 5.4 .4 3.6Z" fill="#f0a35e"/><path d="M5 5.6Q9.2 8.6 9.2 10.6V19.4" fill="none" stroke="#fbd9bb" stroke-width="1"/><path d="M16.8 17.4H22.8M16.8 20.8H22.8" stroke="#6b6b6b" stroke-width="1.8"/></svg>
<span class="t" style="left:1078px;top:65px;font-size:15px;letter-spacing:1px;line-height:16px;color:#3c3c3c;">筛选</span>
<svg class="r" style="left:1113px;top:72px" width="5" height="3" viewBox="0 0 5 3"><path d="M0 0H5L2.5 3Z" fill="#4a4a4a"/></svg>
<svg class="r" style="left:1137px;top:36px;" width="26" height="24" viewBox="0 0 26 24"><rect x="1.6" y=".7" width="13.8" height="22.6" rx=".6" fill="#fdfdfd" stroke="#6b6b6b" stroke-width="1.2"/><text x="4.7" y="11.5" font-size="9.6" textLength="7.6" lengthAdjust="spacingAndGlyphs" fill="#555" stroke="#555" stroke-width=".25" font-family="Liberation Sans,sans-serif">A</text><text x="4.9" y="19.9" font-size="9.6" textLength="7.2" lengthAdjust="spacingAndGlyphs" fill="#555" stroke="#555" stroke-width=".25" font-family="Liberation Sans,sans-serif">Z</text><path d="M20.3 .6V23" stroke="#6c9fe8" stroke-width="1.8"/><path d="M19.6 17.6L25.4 18.6L19.6 23.8Z" fill="#6c9fe8"/></svg>
<span class="t" style="left:1130px;top:65px;font-size:15px;letter-spacing:1px;line-height:16px;color:#3c3c3c;">排序</span>
<svg class="r" style="left:1165px;top:72px" width="5" height="3" viewBox="0 0 5 3"><path d="M0 0H5L2.5 3Z" fill="#4a4a4a"/></svg>
<svg class="r" style="left:1190px;top:36px;" width="24" height="24" viewBox="0 0 24 24"><path d="M1.4 .2V1.8H22.6V.2M8.2 .2V1.8M15.8 .2V1.8" fill="none" stroke="#6c9fe8" stroke-width="1.1"/><rect x="1.6" y="3.9" width="20.8" height="19.4" fill="#fdfdfd" stroke="#6b6b6b" stroke-width="1.2"/><rect x="8.2" y="10" width="7.6" height="7" fill="#6c9fe8"/><path d="M8.2 3.9V23.3M15.8 3.9V23.3M1.6 10H22.4M1.6 17H22.4" stroke="#a8a8a8" stroke-width="1"/></svg>
<span class="t" style="left:1182px;top:65px;font-size:15px;letter-spacing:1px;line-height:16px;color:#3c3c3c;">格式</span>
<svg class="r" style="left:1217px;top:72px" width="5" height="3" viewBox="0 0 5 3"><path d="M0 0H5L2.5 3Z" fill="#4a4a4a"/></svg>
<svg class="r" style="left:1250px;top:36px;" width="25" height="24" viewBox="0 0 25 24"><path d="M9.4 .4V2.2H23.6V.4" fill="none" stroke="#6c9fe8" stroke-width="1.1"/><path d="M.4 9.6H2V23.4H.4" fill="none" stroke="#6c9fe8" stroke-width="1.1"/><path d="M3.4 23.4V6.4Q3.4 3.6 6.2 3.6H9" fill="none" stroke="#8a8a8a" stroke-width="1.1"/><path d="M9.6 23.4H21.4Q23.6 23.4 23.6 21.2V9" fill="none" stroke="#8a8a8a" stroke-width="1.2"/><rect x="9.2" y="3.4" width="15" height="5.6" fill="#6aaa4a"/><rect x="3.2" y="9.6" width="6.4" height="14.2" fill="#6aaa4a"/></svg>
<span class="t" style="left:1234px;top:65px;font-size:15px;letter-spacing:1px;line-height:16px;color:#3c3c3c;">行和列</span>
<svg class="r" style="left:1285px;top:72px" width="5" height="3" viewBox="0 0 5 3"><path d="M0 0H5L2.5 3Z" fill="#4a4a4a"/></svg>
<svg class="r" style="left:1318px;top:36px;" width="24" height="23" viewBox="0 0 24 23"><rect x="1.8" y="1.6" width="20.6" height="16" fill="#fdfdfd" stroke="#8a8a8a" stroke-width="1.2"/><path d="M8.8 1.6V17M15.4 1.6V17M1.8 6.8H22.4M1.8 12H22.4" stroke="#a8a8a8" stroke-width="1"/><path d="M1.4 17H22.6Q23.8 17 23.8 18.4V21.4Q23.8 22.8 22.4 22.8H1.6Q.2 22.8 .2 21.4V18.4Q.2 17 1.4 17Z" fill="#f0a35e"/><rect x="9.2" y="14" width="5.8" height="5" fill="#fdfdfd"/></svg>
<span class="t" style="left:1302px;top:65px;font-size:15px;letter-spacing:1px;line-height:16px;color:#3c3c3c;">工作表</span>
<svg class="r" style="left:1354px;top:72px" width="5" height="3" viewBox="0 0 5 3"><path d="M0 0H5L2.5 3Z" fill="#4a4a4a"/></svg>
<svg class="r" style="left:1393px;top:36px;" width="26" height="24" viewBox="0 0 26 24"><path d="M1.4 22.7V2.2Q1.4 .5 3.1 .5H23.2Q24.9 .5 24.9 2.2V16.8H10V22.7Z" fill="#fdfdfd" stroke="#7f7f7f" stroke-width="1.1"/><path d="M10 .5V16.8M17.4 .5V16.8M1.4 6.2H24.9M1.4 11.6H24.9M1.4 16.8H10" stroke="#9a9a9a" stroke-width=".9"/><path d="M1.6 6.2L10 .6M1.4 11.6L10 6.2M1.4 16.8L10 11.6M1.4 22.6L10 16.8M10 6.2L17.4 .6M17.4 6.2L24.8 .6" stroke="#7f7f7f" stroke-width=".8"/><rect x="10.2" y="6.4" width="7" height="5" fill="#6aaa4a"/></svg>
<span class="t" style="left:1370px;top:65px;font-size:15px;letter-spacing:1px;line-height:16px;color:#3c3c3c;">冻结窗格</span>
<svg class="r" style="left:1437px;top:72px" width="5" height="3" viewBox="0 0 5 3"><path d="M0 0H5L2.5 3Z" fill="#4a4a4a"/></svg>
<svg class="r" style="left:1462px;top:36px;" width="25" height="24" viewBox="0 0 25 24"><circle cx="10.6" cy="10.6" r="9.6" fill="#fdfdfd" stroke="#4a87d8" stroke-width="1.7"/><path d="M17.8 17.8L23 22.6" stroke="#3f7fd4" stroke-width="3" stroke-linecap="round"/><text x="3.8" y="10.8" font-size="8.6" fill="#d98a45" font-family="Liberation Sans,sans-serif">ab</text><text x="8.6" y="17.4" font-size="8.2" fill="#4a87d8" font-family="Liberation Sans,sans-serif">ac</text><path d="M4.4 12.4V15.2H7.6M6.4 14L7.8 15.2L6.4 16.4" fill="none" stroke="#4a87d8" stroke-width=".9"/></svg>
<span class="t" style="left:1454px;top:65px;font-size:15px;letter-spacing:1px;line-height:16px;color:#3c3c3c;">查找</span>
<svg class="r" style="left:1489px;top:72px" width="5" height="3" viewBox="0 0 5 3"><path d="M0 0H5L2.5 3Z" fill="#4a4a4a"/></svg>
<span class="t ser" style="left:1514px;top:29px;font-size:32px;line-height:36px;color:#6c9fe8">Ω</span>
<span class="t" style="left:1506px;top:65px;font-size:15px;letter-spacing:1px;line-height:16px;color:#3c3c3c;">符号</span>
<svg class="r" style="left:1541px;top:72px" width="5" height="3" viewBox="0 0 5 3"><path d="M0 0H5L2.5 3Z" fill="#4a4a4a"/></svg>
<div class="r" style="left:1557px;top:32px;width:1px;height:63px;background:#dcdcdc;"></div>
<div class="r" style="left:1897px;top:159px;width:13px;height:2px;background:#a9a9ab;"></div>
<svg class="r" style="left:1899px;top:174px;" width="9" height="5" viewBox="0 0 9 5"><path d="M0 5H9L4.5 0Z" fill="#747474"/></svg>
<div class="r" style="left:1897px;top:189px;width:13px;height:777px;background:#f4f4f5;border-radius:1px"></div>
<div class="r" style="left:1900px;top:573px;width:7px;height:1px;background:#9a9a9a;"></div>
<div class="r" style="left:1900px;top:577px;width:7px;height:1px;background:#9a9a9a;"></div>
<div class="r" style="left:1900px;top:581px;width:7px;height:1px;background:#9a9a9a;"></div>
<svg class="r" style="left:1899px;top:983px;" width="9" height="5" viewBox="0 0 9 5"><path d="M0 0H9L4.5 5Z" fill="#747474"/></svg>
<div class="r" style="left:1913px;top:545px;width:7px;height:100px;background:#61a93d;"></div>
<svg class="r" style="left:1915px;top:592px;" width="4" height="8" viewBox="0 0 4 8"><path d="M4 0V8L0 4Z" fill="#f3f9ee"/></svg>
<svg class="r" style="left:8px;top:1003px;" width="9" height="10" viewBox="0 0 9 10"><path d="M.8 0V10" stroke="#a6a6a8" stroke-width="1.4"/><path d="M8.4 0V10L2.2 5Z" fill="#a6a6a8"/></svg>
<svg class="r" style="left:26px;top:1003px;" width="6" height="10" viewBox="0 0 6 10"><path d="M6 0V10L0 5Z" fill="#a6a6a8"/></svg>
<svg class="r" style="left:39px;top:1003px;" width="6" height="10" viewBox="0 0 6 10"><path d="M0 0V10L6 5Z" fill="#a6a6a8"/></svg>
<svg class="r" style="left:56px;top:1003px;" width="9" height="10" viewBox="0 0 9 10"><path d="M8.2 0V10" stroke="#a6a6a8" stroke-width="1.4"/><path d="M.6 0V10L6.8 5Z" fill="#a6a6a8"/></svg>
<div class="r" style="left:74px;top:995px;width:89px;height:25px;background:#ffffff;"></div>
<span class="t" style="left:90px;top:1000px;font-size:17px;line-height:17px;color:#5ea23b;line-height:18px;letter-spacing:.85px">Sheet1</span>
<svg class="r" style="left:172px;top:1002px;" width="12" height="12" viewBox="0 0 12 12"><path d="M6 .2V11.8M.2 6H11.8" stroke="#4f4f4f" stroke-width="1.7"/></svg>
<div class="r" style="left:1126px;top:1001px;width:2px;height:13px;background:#9c9c9e;"></div>
<svg class="r" style="left:1139px;top:1003px;" width="5" height="9" viewBox="0 0 5 9"><path d="M5 0V9L0 4.5Z" fill="#555"/></svg>
<div class="r" style="left:1155px;top:1001px;width:697px;height:13px;background:#f4f4f5;border-radius:1px"></div>
<div class="r" style="left:1499px;top:1004px;width:1px;height:7px;background:#9a9a9a;"></div>
<div class="r" style="left:1503px;top:1004px;width:1px;height:7px;background:#9a9a9a;"></div>
<div class="r" style="left:1507px;top:1004px;width:1px;height:7px;background:#9a9a9a;"></div>
<svg class="r" style="left:1867px;top:1003px;" width="5" height="9" viewBox="0 0 5 9"><path d="M0 0V9L5 4.5Z" fill="#555"/></svg>
<div class="r" style="left:1886px;top:1001px;width:2px;height:13px;background:#9c9c9e;"></div>
<div class="r" style="left:1442px;top:1027px;width:1px;height:13px;background:#9c9c9e;"></div>
<div class="r" style="left:1447px;top:1029px;width:7px;height:7px;background:#6aaa4a;"></div>
<span class="t" style="left:1459px;top:1024px;font-size:15px;letter-spacing:1px;line-height:16px;color:#3c3c3c;">实时备份</span>
<div class="r" style="left:1525px;top:1021px;width:37px;height:22px;background:#c5e0b8;"></div>
<svg class="r" style="left:1536px;top:1025px;" width="15" height="14" viewBox="0 0 15 14"><rect x="0" y="0" width="15" height="14" rx=".8" fill="#6a6a6a"/><path d="M3.6 0V14M11.4 0V14M0 4.8H15M0 10.4H15" stroke="#c5e0b8" stroke-width="1"/></svg>
<svg class="r" style="left:1573px;top:1025px;" width="15" height="14" viewBox="0 0 15 14"><rect x="0" y="0" width="15" height="14" rx=".8" fill="#6a6a6a"/><path d="M4.2 0V10M8.8 0V10M0 3H11M0 6.2H11" stroke="#dfdfe1" stroke-width="1"/><path d="M0 11.2H15M11.8 0V14" fill="none" stroke="#dfdfe1" stroke-width="1" stroke-dasharray="1.6 1.2"/></svg>
<svg class="r" style="left:1610px;top:1025px;" width="15" height="14" viewBox="0 0 15 14"><rect x="0" y="0" width="15" height="14" rx=".8" fill="#6a6a6a"/><path d="M10 0V14M1.2 8.8H14.2" stroke="#dfdfe1" stroke-width="1.7"/></svg>
<svg class="r" style="left:1630px;top:1031px" width="5" height="3" viewBox="0 0 5 3"><path d="M0 0H5L2.5 3Z" fill="#4a4a4a"/></svg>
<svg class="r" style="left:1652px;top:1025px;" width="14" height="14" viewBox="0 0 14 14"><rect x="0" y="0" width="14" height="14" rx=".8" fill="#6a6a6a"/><path d="M7 2.2C9.3 2.2 10.5 3.8 10.5 5.5C10.5 6.9 9.5 7.7 9.1 8.7V10.4H4.9V8.7C4.5 7.7 3.5 6.9 3.5 5.5C3.5 3.8 4.7 2.2 7 2.2Z" fill="#dfdfe1"/><rect x="5.2" y="11.2" width="3.6" height="1.1" fill="#dfdfe1"/></svg>
<svg class="r" style="left:1672px;top:1031px" width="5" height="3" viewBox="0 0 5 3"><path d="M0 0H5L2.5 3Z" fill="#4a4a4a"/></svg>
<span class="t" style="left:1690px;top:1025px;font-size:16px;line-height:16px;color:#3c3c3c;line-height:16px;letter-spacing:1.6px">100</span>
<span class="t" style="left:1729px;top:1025px;font-size:16px;line-height:16px;color:#3c3c3c;line-height:16px;transform:scaleX(.8);transform-origin:0 0">%</span>
<div class="r" style="left:1746px;top:1031px;width:10px;height:2px;background:#4f4f4f;"></div>
<div class="r" style="left:1764px;top:1031px;width:63px;height:2px;background:#5ea23b;"></div>
<div class="r" style="left:1827px;top:1031px;width:71px;height:2px;background:#8e8e90;"></div>
<div class="r" style="left:1825px;top:1025px;width:13px;height:13px;background:#fbfbfb;box-sizing:border-box;border:1px solid #8a8a8a;border-radius:50%"></div>
<svg class="r" style="left:1904px;top:1027px;" width="10" height="10" viewBox="0 0 10 10"><path d="M5 .2V9.8M.2 5H9.8" stroke="#4f4f4f" stroke-width="1.6"/></svg>
</body></html>
